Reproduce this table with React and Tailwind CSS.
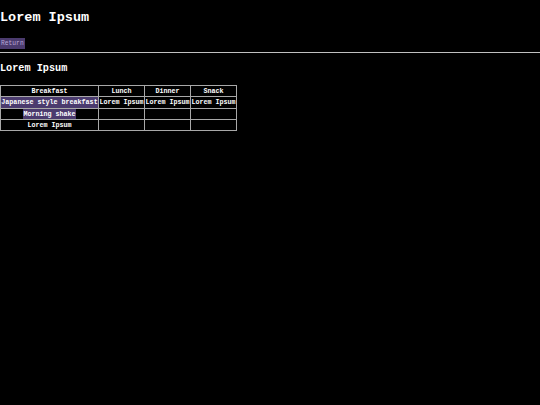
export default function App() {
  const mono = { fontFamily: '"Liberation Mono", "DejaVu Sans Mono", monospace' };
  const cell = 'border border-[#a8a8a8] px-0 py-0 text-center whitespace-nowrap';
  return (
    <div className="min-h-[405px] w-[540px] bg-black text-white" style={mono}>
      <header className="pt-[9px]">
        <h1 className="text-[13.5px] leading-[17px] font-bold">Lorem Ipsum</h1>
        <button className="mt-[12px] block bg-[#4b3b6e] px-[1px] text-[6.3px] leading-[11px] text-[#b8a8d8]">Return</button>
        <hr className="mt-[3px] border-t border-[#c0c0c0]" />
      </header>
      <main className="pt-[9px]">
        <h2 className="text-[10.2px] leading-[14px] font-bold">Lorem Ipsum</h2>
        <table className="mt-[9px] border-collapse text-[6.7px] leading-[10.3px] font-bold">
          <thead>
            <tr>
              <th className={`${cell} w-[98px]`}>Breakfast</th>
              <th className={`${cell} w-[46px]`}>Lunch</th>
              <th className={`${cell} w-[46px]`}>Dinner</th>
              <th className={`${cell} w-[46px]`}>Snack</th>
            </tr>
          </thead>
          <tbody>
            <tr>
              <td className={cell}><span className="bg-[#4b3b6e] inline-block">Japanese style breakfast</span></td>
              <td className={cell}>Lorem Ipsum</td>
              <td className={cell}>Lorem Ipsum</td>
              <td className={cell}>Lorem Ipsum</td>
            </tr>
            <tr>
              <td className={cell}><span className="bg-[#4b3b6e] inline-block">Morning shake</span></td>
              <td className={cell}></td>
              <td className={cell}></td>
              <td className={cell}></td>
            </tr>
            <tr>
              <td className={cell}>Lorem Ipsum</td>
              <td className={cell}></td>
              <td className={cell}></td>
              <td className={cell}></td>
            </tr>
          </tbody>
        </table>
      </main>
    </div>
  );
}
